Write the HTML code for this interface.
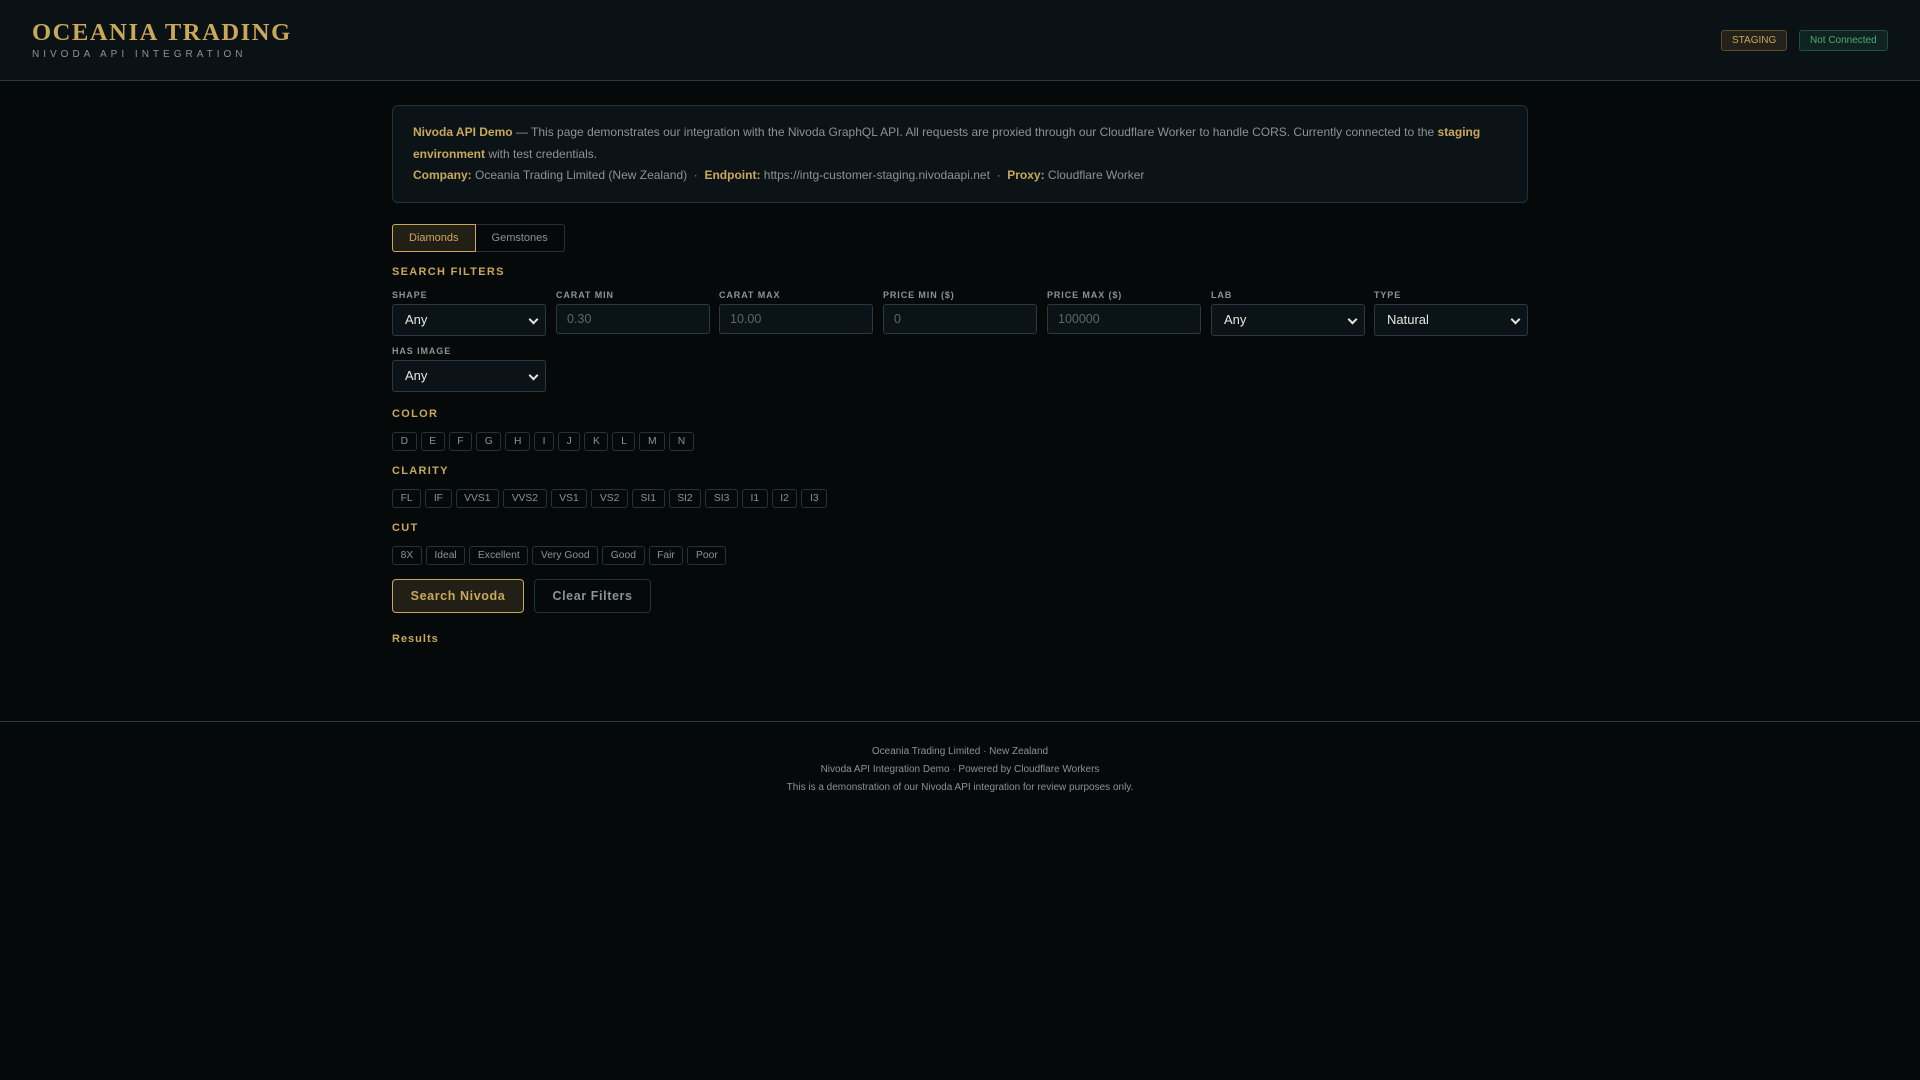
<!DOCTYPE html>
<html><head><meta charset="utf-8"><style>
*{box-sizing:border-box;margin:0;padding:0}
body{width:1920px;height:1080px;background:#05090a;font-family:"Liberation Sans",sans-serif;color:#8a9396;overflow:hidden}
.hdr{height:81px;background:#0b1215;border-bottom:1px solid #2a3a42;position:relative}
.t1{position:absolute;left:32px;top:19px;font-family:"Liberation Serif",serif;font-weight:bold;font-size:24.5px;letter-spacing:1.6px;color:#c9a85a}
.t2{position:absolute;left:32px;top:49px;font-size:10px;letter-spacing:4px;color:#8a9396}
.badge{position:absolute;top:30px;height:21px;font-size:10px;line-height:19px;padding:0 10px;border-radius:3px}
.b1{left:1721px;border:1px solid #5a4c2a;background:#23211a;color:#c9a85a}
.b2{left:1799px;border:1px solid #23503c;background:#0f2420;color:#4fa877}
.info{position:absolute;left:392px;top:105px;width:1136px;height:98px;border:1px solid #24323a;border-radius:6px;background:#0c1317;padding:16px 20px;font-size:12px;line-height:21.5px;color:#8a9396}
.g{color:#c9a85a;font-weight:bold}
.tabs{position:absolute;left:392px;top:224px;display:flex}
.tab{height:28px;font-size:11px;line-height:26px;padding:0 16px;border:1px solid #24323a;color:#8a9396}
.tab.a{background:#221f16;border-color:#c9a85a;color:#c9a85a;border-radius:3px 0 0 3px;padding:0 16px}
.tab.b{border-left:none;border-radius:0 3px 3px 0;padding:0 16px}
.sec{position:absolute;left:392px;font-size:11px;font-weight:bold;letter-spacing:1.3px;color:#c9a85a}
.lbl{position:absolute;font-size:9px;font-weight:bold;letter-spacing:.9px;color:#8a9396}
.inp{position:absolute;height:30px;width:154px;border:1px solid #2a3a42;border-radius:3px;background:#0c1317;font-size:12.5px;line-height:28px;padding-left:10px;color:#5c6669}
.sel{height:32px;color:#e4e6e6;font-size:13px;line-height:30px;padding-left:12px}
.sel:after{content:"";position:absolute;right:8px;top:11px;width:5px;height:5px;border-right:2px solid #e4e6e6;border-bottom:2px solid #e4e6e6;transform:rotate(45deg)}
.chips{position:absolute;left:392px;display:flex;gap:4px}
.chip{height:19px;font-size:10.3px;line-height:17px;padding:0 7.6px;border:1px solid #24323a;border-radius:3px;color:#8a9396}
.btn{position:absolute;top:579px;height:34px;border-radius:4px;font-size:12.5px;font-weight:bold;letter-spacing:.6px;line-height:32px;text-align:center}
.foot{position:absolute;top:721px;left:0;width:1920px;border-top:1px solid #2a3a42;text-align:center;font-size:10px;line-height:18px;padding-top:21px;color:#8a9396}
</style></head><body>
<div class="hdr"><div class="t1">OCEANIA TRADING</div><div class="t2">NIVODA API INTEGRATION</div>
<div class="badge b1">STAGING</div><div class="badge b2">Not Connected</div></div>
<div class="info"><span class="g">Nivoda API Demo</span> — This page demonstrates our integration with the Nivoda GraphQL API. All requests are proxied through our Cloudflare Worker to handle CORS. Currently connected to the <span class="g">staging environment</span> with test credentials.<br><span class="g">Company:</span> Oceania Trading Limited (New Zealand) &nbsp;·&nbsp; <span class="g">Endpoint:</span> https://intg-customer-staging.nivodaapi.net &nbsp;·&nbsp; <span class="g">Proxy:</span> Cloudflare Worker</div>
<div class="tabs"><div class="tab a">Diamonds</div><div class="tab b">Gemstones</div></div>
<div class="sec" style="top:266px">SEARCH FILTERS</div>
<div class="lbl" style="left:392px;top:290px">SHAPE</div><div class="inp sel" style="left:392px;top:304px">Any</div>
<div class="lbl" style="left:556px;top:290px">CARAT MIN</div><div class="inp" style="left:556px;top:304px">0.30</div>
<div class="lbl" style="left:719px;top:290px">CARAT MAX</div><div class="inp" style="left:719px;top:304px">10.00</div>
<div class="lbl" style="left:883px;top:290px">PRICE MIN ($)</div><div class="inp" style="left:883px;top:304px">0</div>
<div class="lbl" style="left:1047px;top:290px">PRICE MAX ($)</div><div class="inp" style="left:1047px;top:304px">100000</div>
<div class="lbl" style="left:1211px;top:290px">LAB</div><div class="inp sel" style="left:1211px;top:304px">Any</div>
<div class="lbl" style="left:1374px;top:290px">TYPE</div><div class="inp sel" style="left:1374px;top:304px">Natural</div>
<div class="lbl" style="left:392px;top:346px">HAS IMAGE</div><div class="inp sel" style="left:392px;top:360px">Any</div>
<div class="sec" style="top:408px">COLOR</div>
<div class="chips" style="top:432px"><div class="chip">D</div><div class="chip">E</div><div class="chip">F</div><div class="chip">G</div><div class="chip">H</div><div class="chip">I</div><div class="chip">J</div><div class="chip">K</div><div class="chip">L</div><div class="chip">M</div><div class="chip">N</div></div>
<div class="sec" style="top:465px">CLARITY</div>
<div class="chips" style="top:489px"><div class="chip">FL</div><div class="chip">IF</div><div class="chip">VVS1</div><div class="chip">VVS2</div><div class="chip">VS1</div><div class="chip">VS2</div><div class="chip">SI1</div><div class="chip">SI2</div><div class="chip">SI3</div><div class="chip">I1</div><div class="chip">I2</div><div class="chip">I3</div></div>
<div class="sec" style="top:522px">CUT</div>
<div class="chips" style="top:546px"><div class="chip">8X</div><div class="chip">Ideal</div><div class="chip">Excellent</div><div class="chip">Very Good</div><div class="chip">Good</div><div class="chip">Fair</div><div class="chip">Poor</div></div>
<div class="btn" style="left:392px;width:132px;border:1px solid #c9a85a;background:#221f16;color:#c9a85a">Search Nivoda</div>
<div class="btn" style="left:534px;width:117px;border:1px solid #24323a;color:#8a9396">Clear Filters</div>
<div class="sec" style="top:633px;letter-spacing:1px">Results</div>
<div class="foot">Oceania Trading Limited · New Zealand<br>Nivoda API Integration Demo · Powered by Cloudflare Workers<br>This is a demonstration of our Nivoda API integration for review purposes only.</div>
</body></html>
